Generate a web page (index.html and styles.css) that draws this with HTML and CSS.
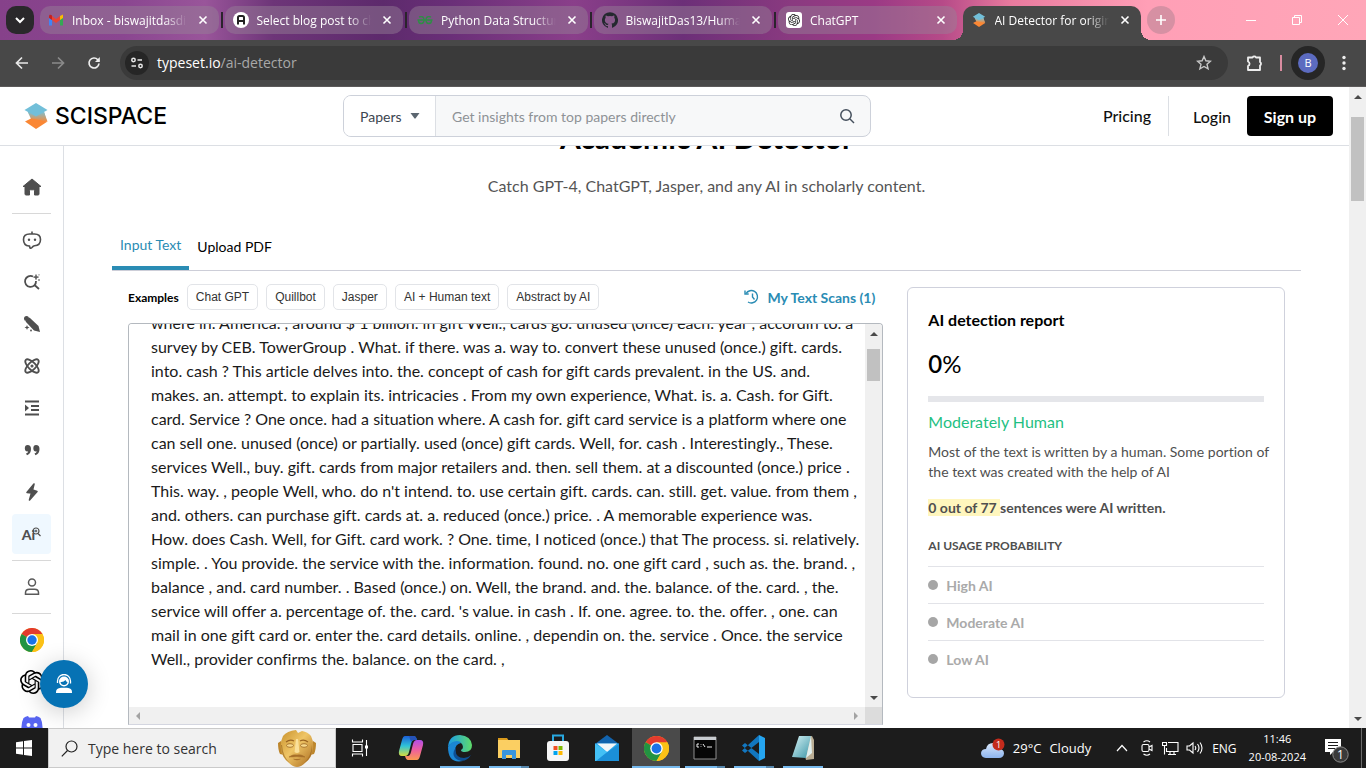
FILE: index.html
```html
<!DOCTYPE html>
<html lang="en">
<head>
<meta charset="utf-8">
<title>AI Detector for original content</title>
<link rel="stylesheet" href="styles.css">
</head>
<body>
<svg class="defs" aria-hidden="true">
  <defs>
    <linearGradient id="sciGrad" x1="0" y1="0" x2="0" y2="1"><stop offset="0" stop-color="#7cc0d2"/><stop offset="1" stop-color="#f58a3c"/></linearGradient>
    <linearGradient id="edgeA" x1="0" y1="0" x2="1" y2="0"><stop offset="0" stop-color="#1a9be8"/><stop offset="1" stop-color="#5fdc6a"/></linearGradient>
    <linearGradient id="copA" x1="0" y1="0" x2="0" y2="1"><stop offset="0" stop-color="#1b5fd8"/><stop offset=".5" stop-color="#2fc3d8"/><stop offset="1" stop-color="#d8dc3c"/></linearGradient>
    <linearGradient id="copB" x1="0" y1="0" x2="0" y2="1"><stop offset="0" stop-color="#b04ee8"/><stop offset=".5" stop-color="#ee5f9e"/><stop offset="1" stop-color="#fb9a50"/></linearGradient>
    <linearGradient id="gold" x1="0" y1="0" x2="1" y2="1"><stop offset="0" stop-color="#c8912c"/><stop offset=".45" stop-color="#efc566"/><stop offset="1" stop-color="#a8681c"/></linearGradient>
    <linearGradient id="cloudG" x1="0" y1="0" x2="0" y2="1"><stop offset="0" stop-color="#dbe9fb"/><stop offset="1" stop-color="#8db4ee"/></linearGradient>
    <linearGradient id="noteG" x1="0" y1="0" x2="1" y2="1"><stop offset="0" stop-color="#d9f3f5"/><stop offset="1" stop-color="#3b96a8"/></linearGradient>
    <symbol id="close" viewBox="0 0 10 10"><path d="M1.500 1.500l7 7M8.500 1.500l-7 7" stroke="#fff" stroke-width="1.600" fill="none"/></symbol>
    <symbol id="scispace" viewBox="0 0 24 26"><path d="M3.500 8.500L20 8.500l2.500 9L12 20 7 16z" fill="url(#sciGrad)"/><path d="M1 18.500L8 15l15.500 3.500L12 26z" fill="#fa8734"/><path d="M4 9l8 4.500L20 9l3.500 9.500L8 15.500z" fill="url(#sciGrad)"/><path d="M12 0l11.500 7L12 13.500.5 7z" fill="#72bfd9"/></symbol>
    <symbol id="openai" viewBox="0 0 24 24"><path fill="currentColor" d="M22.2819 9.8211a5.9847 5.9847 0 0 0-.5157-4.9108 6.0462 6.0462 0 0 0-6.5098-2.9A6.0651 6.0651 0 0 0 4.9807 4.1818a5.9847 5.9847 0 0 0-3.9977 2.9 6.0462 6.0462 0 0 0 .7427 7.0966 5.98 5.98 0 0 0 .511 4.9107 6.051 6.051 0 0 0 6.5146 2.9001A5.9847 5.9847 0 0 0 13.2599 24a6.0557 6.0557 0 0 0 5.7718-4.2058 5.9894 5.9894 0 0 0 3.9977-2.9001 6.0557 6.0557 0 0 0-.7475-7.0729zm-9.022 12.6081a4.4755 4.4755 0 0 1-2.8764-1.0408l.1419-.0804 4.7783-2.7582a.7948.7948 0 0 0 .3927-.6813v-6.7369l2.02 1.1686a.071.071 0 0 1 .038.052v5.5826a4.504 4.504 0 0 1-4.4945 4.4944zm-9.6607-4.1254a4.4708 4.4708 0 0 1-.5346-3.0137l.142.0852 4.783 2.7582a.7712.7712 0 0 0 .7806 0l5.8428-3.3685v2.3324a.0804.0804 0 0 1-.0332.0615L9.74 19.9502a4.4992 4.4992 0 0 1-6.1408-1.6464zM2.3408 7.8956a4.485 4.485 0 0 1 2.3655-1.9728V11.6a.7664.7664 0 0 0 .3879.6765l5.8144 3.3543-2.0201 1.1685a.0757.0757 0 0 1-.071 0l-4.8303-2.7865A4.504 4.504 0 0 1 2.3408 7.872zm16.5963 3.8558L13.1038 8.364 15.1192 7.2a.0757.0757 0 0 1 .071 0l4.8303 2.7913a4.4944 4.4944 0 0 1-.6765 8.1042v-5.6772a.79.79 0 0 0-.407-.667zm2.0107-3.0231l-.142-.0852-4.7735-2.7818a.7759.7759 0 0 0-.7854 0L9.409 9.2297V6.8974a.0662.0662 0 0 1 .0284-.0615l4.8303-2.7866a4.4992 4.4992 0 0 1 6.6802 4.66zM8.3065 12.863l-2.02-1.1638a.0804.0804 0 0 1-.038-.0567V6.0742a4.4992 4.4992 0 0 1 7.3757-3.4537l-.142.0805L8.704 5.459a.7948.7948 0 0 0-.3927.6813zm1.0976-2.3654l2.602-1.4998 2.6069 1.4998v2.9994l-2.5974 1.4997-2.6067-1.4997Z"/></symbol>
    <symbol id="chrome" viewBox="0 0 24 24"><circle cx="12" cy="12" r="12" fill="#fbc116"/><path d="M12 12L1.600 6A12 12 0 0 1 22.400 6z" fill="#e33b2e"/><path d="M1.600 6A12 12 0 0 0 12 24l5.200-9L12 12z" fill="#229342"/><path d="M12 6h10.400A12 12 0 0 1 12 24l5.200-9z" fill="#fbc116"/><circle cx="12" cy="12" r="6" fill="#fff"/><circle cx="12" cy="12" r="4.700" fill="#1a73e8"/></symbol>
    <symbol id="up" viewBox="0 0 8 4"><path d="M0 4l4-4 4 4z" fill="currentColor"/></symbol>
    <symbol id="down" viewBox="0 0 8 4"><path d="M0 0l4 4 4-4z" fill="currentColor"/></symbol>
  </defs>
</svg>

<header class="titlebar">
  <button class="tab-search" aria-label="Search tabs"><svg width="10" height="7" viewBox="0 0 10 7"><path d="M1 1l4 4 4-4" fill="none" stroke="#fff" stroke-width="2"/></svg></button>
  <div class="tablist" role="tablist">
    <div class="tab" role="tab">
      <svg class="favicon" viewBox="0 0 16 16"><path d="M1 4v9.500h3V6z" fill="#4285f4"/><path d="M15 4v9.500h-3V6z" fill="#34a853"/><path d="M12 4l3-1.500V6l-3 2z" fill="#fbbc04"/><path d="M4 4l4 3 4-3v4l-4 3-4-3z" fill="#ea4335"/><path d="M1 4.500C1 2 3 2.500 4 3.500V8L1 6z" fill="#c5221f"/></svg>
      <span class="tab-title">Inbox - biswajitdasdigital</span><button class="tab-close" aria-label="Close tab"><svg width="10" height="10"><use href="#close"/></svg></button>
    </div>
    <div class="tab" role="tab">
      <svg class="favicon" viewBox="0 0 16 16"><circle cx="8" cy="8" r="8" fill="#fff"/><path d="M5 12.500V5.500Q5 4 6.500 4h3Q11 4 11 5.500v7M5 9h6" fill="none" stroke="#222" stroke-width="2"/></svg>
      <span class="tab-title">Select blog post to change</span><button class="tab-close" aria-label="Close tab"><svg width="10" height="10"><use href="#close"/></svg></button>
    </div>
    <div class="tab" role="tab">
      <svg class="favicon" viewBox="0 0 16 16"><path d="M.5 8h15M2 5q5-1.500 5 3 0 3.500-3 3.500Q1.500 11.500 1.500 8M14 5Q9 3.500 9 8q0 3.500 3 3.500 2.500 0 2.500-3.500" fill="none" stroke="#2f8d46" stroke-width="1.500"/></svg>
      <span class="tab-title">Python Data Structures</span><button class="tab-close" aria-label="Close tab"><svg width="10" height="10"><use href="#close"/></svg></button>
    </div>
    <div class="tab" role="tab">
      <svg class="favicon" viewBox="0 0 24 24"><path fill="#24292f" d="M12 .3a12 12 0 0 0-3.800 23.400c.6.100.8-.3.800-.6v-2c-3.300.7-4-1.600-4-1.600-.6-1.400-1.400-1.800-1.400-1.800-1-.7.100-.7.100-.7 1.200 0 1.900 1.200 1.900 1.200 1 1.800 2.800 1.300 3.500 1 0-.8.400-1.300.7-1.600-2.700-.3-5.500-1.300-5.500-6 0-1.200.5-2.300 1.300-3.100-.2-.4-.6-1.600 0-3.200 0 0 1-.3 3.400 1.200a11.500 11.500 0 0 1 6 0c2.300-1.500 3.300-1.200 3.300-1.200.6 1.600.2 2.800 0 3.200.9.800 1.300 1.900 1.300 3.200 0 4.600-2.800 5.600-5.500 5.900.5.400.9 1 .9 2.200v3.300c0 .3.100.7.800.6A12 12 0 0 0 12 .3"/></svg>
      <span class="tab-title">BiswajitDas13/Humanize</span><button class="tab-close" aria-label="Close tab"><svg width="10" height="10"><use href="#close"/></svg></button>
    </div>
    <div class="tab" role="tab">
      <span class="favicon gpt"><svg width="12" height="12"><use href="#openai"/></svg></span>
      <span class="tab-title">ChatGPT</span><button class="tab-close" aria-label="Close tab"><svg width="10" height="10"><use href="#close"/></svg></button>
    </div>
    <div class="tab active" role="tab" aria-selected="true">
      <svg class="favicon sci"><use href="#scispace"/></svg>
      <span class="tab-title">AI Detector for original</span><button class="tab-close" aria-label="Close tab"><svg width="10" height="10"><use href="#close"/></svg></button>
    </div>
  </div>
  <button class="new-tab" aria-label="New tab"><svg width="12" height="12" viewBox="0 0 12 12"><path d="M6 1v10M1 6h10" stroke="#fff" stroke-width="1.600"/></svg></button>
  <div class="window-controls">
    <button aria-label="Minimize"><svg width="12" height="12" viewBox="0 0 12 12"><path d="M1 6.500h10" stroke="#fff"/></svg></button>
    <button aria-label="Restore"><svg width="12" height="12" viewBox="0 0 12 12"><path d="M1.500 3.500h7v7h-7zM3.500 3.500v-2h7v7h-2" fill="none" stroke="#fff"/></svg></button>
    <button aria-label="Close"><svg width="12" height="12" viewBox="0 0 12 12"><path d="M1 1l10 10M11 1L1 11" stroke="#fff"/></svg></button>
  </div>
</header>

<nav class="toolbar" aria-label="Browser">
  <button aria-label="Back"><svg width="14" height="14" viewBox="0 0 14 14"><path d="M13 7H2M7 1.500L1.500 7 7 12.500" fill="none" stroke="#e8e8e8" stroke-width="1.700"/></svg></button>
  <button aria-label="Forward"><svg width="14" height="14" viewBox="0 0 14 14"><path d="M1 7h11M7 1.500L12.500 7 7 12.500" fill="none" stroke="#8a8a8a" stroke-width="1.700"/></svg></button>
  <button aria-label="Reload"><svg width="14" height="14" viewBox="0 0 14 14"><path d="M12 7.500A5 5 0 1 1 10.800 3.700L12 5" fill="none" stroke="#eee" stroke-width="1.700"/><path d="M12.800 1v5H8z" fill="#eee"/></svg></button>
  <div class="omnibox">
    <button class="site-info" aria-label="Site information"><svg width="14" height="14" viewBox="0 0 14 14" fill="none" stroke="#e8e8e8" stroke-width="1.500"><circle cx="3.500" cy="4" r="1.700"/><path d="M7.500 4H12M1.500 10H6"/><circle cx="10.500" cy="10" r="1.700"/></svg></button>
    <span class="url"><b>typeset.io</b>/ai-detector</span>
    <button class="star" aria-label="Bookmark"><svg width="16" height="16" viewBox="0 0 16 16"><path d="M8 1.500l1.900 4.300 4.600.4-3.500 3.100 1.100 4.600L8 11.500l-4.100 2.400L5 9.300 1.500 6.200l4.600-.4z" fill="none" stroke="#c8c8c8" stroke-width="1.400"/></svg></button>
  </div>
  <button class="ext" aria-label="Extensions"><svg width="18" height="18" viewBox="0 0 18 18"><path d="M2 3.500h4.500a2 2 0 0 1 3.500 0h4V8a2 2 0 0 1 0 3.500V16H2v-4a2.400 2.400 0 0 0 0-4.500z" fill="none" stroke="#eee" stroke-width="1.800" stroke-linejoin="round"/></svg></button>
  <span class="toolbar-rule"></span>
  <button class="profile" aria-label="Profile"><span>B</span></button>
  <button class="kebab" aria-label="Menu"><svg width="4" height="16" viewBox="0 0 4 16" fill="#eee"><circle cx="2" cy="2.500" r="1.700"/><circle cx="2" cy="8" r="1.700"/><circle cx="2" cy="13.500" r="1.700"/></svg></button>
</nav>

<div class="viewport">
  <div class="site">
    <header class="site-header">
      <a class="brand" href="#"><svg width="24" height="26"><use href="#scispace"/></svg><span>SCISPACE</span></a>
      <form class="search">
        <div class="search-type">
          <select aria-label="Search type"><option>Papers</option></select>
          <svg width="10" height="6" viewBox="0 0 10 6"><path d="M.5 0h9L5.500 5.500h-1z" fill="#5b6670"/></svg>
        </div>
        <input type="text" aria-label="Search" placeholder="Get insights from top papers directly">
        <button type="button" aria-label="Search"><svg width="16" height="16" viewBox="0 0 16 16" fill="none" stroke="#444f5c" stroke-width="1.500"><circle cx="7" cy="7" r="5.200"/><path d="M11 11l4 4"/></svg></button>
      </form>
      <div class="account">
        <a class="pricing" href="#">Pricing</a>
        <a class="login" href="#">Login</a>
        <button class="signup">Sign up</button>
      </div>
    </header>

    <div class="body">
      <nav class="sidebar" aria-label="Tools">
        <a href="#" aria-label="Home"><svg width="20" height="18" viewBox="0 0 20 18"><path d="M10 1l9 7.500h-2V16q0 1-1 1h-3.500v-4.500q0-.7-.7-.7H8.200q-.7 0-.7.7V17H4q-1 0-1-1V8.500H1z" fill="#4f4f4f" stroke="#4f4f4f" stroke-linejoin="round"/></svg></a>
        <hr>
        <a href="#" aria-label="Chat"><svg width="20" height="18" viewBox="0 0 20 18"><path d="M7.500 15H7q-5.500-.5-5.500-6.500 0-5.500 6-5.500h5q6 0 6 5.500 0 6-6 6.300-1.300.2-2.500 1.700-1 1-2 .5zM10 3V.5" fill="none" stroke="#4f4f4f" stroke-width="1.600"/><circle cx="7" cy="8.700" r="1.200" fill="#4f4f4f"/><circle cx="13" cy="8.700" r="1.200" fill="#4f4f4f"/></svg></a>
        <a href="#" aria-label="Find papers"><svg width="18" height="18" viewBox="0 0 18 18"><path d="M10 3.500A5.500 5.500 0 1 0 13 8M11.500 12l4.500 4" fill="none" stroke="#4f4f4f" stroke-width="1.800"/><path d="M13 1.500l.6 2 2 .6-2 .6-.6 2-.6-2-2-.6 2-.6zM16 6v2M15 7h2M16 1v1.600" fill="#4f4f4f" stroke="#4f4f4f" stroke-width=".6"/></svg></a>
        <a href="#" aria-label="Write"><svg width="18" height="18" viewBox="0 0 18 18" fill="#4f4f4f"><path d="M2.500 6.500l4-4L15.500 11l1.500 6-6-1.500z"/><circle cx="3.500" cy="3.500" r="2.500"/><path d="M4 10l.7 1.800 1.800.7-1.800.7L4 15l-.7-1.800-1.800-.7 1.800-.7z"/><circle cx="8" cy="15.500" r=".9"/></svg></a>
        <a href="#" aria-label="Topics"><svg width="16" height="16" viewBox="0 0 16 16" fill="none" stroke="#4f4f4f" stroke-width="1.900"><ellipse cx="8" cy="8" rx="8.700" ry="3.700" transform="rotate(45 8 8)"/><ellipse cx="8" cy="8" rx="8.700" ry="3.700" transform="rotate(-45 8 8)"/><circle cx="8" cy="8" r=".6"/></svg></a>
        <a href="#" aria-label="Paraphrase"><svg width="16" height="16" viewBox="0 0 16 16"><path d="M1 1.500h14M7 6h8M7 10h8M1 14.500h14" stroke="#4f4f4f" stroke-width="1.800"/><path d="M1 4.500L5 8l-4 3.500z" fill="#4f4f4f"/></svg></a>
        <a href="#" aria-label="Citations"><svg width="16" height="12" viewBox="0 0 16 12" fill="#4f4f4f"><path d="M3.500 1Q7 1 7 5q0 5-4 6.200L2 9.500Q4 9 4.200 7.300 1 8 .8 4.200 1 1 3.500 1zM12 1q3.500 0 3.500 4 0 5-4 6.200l-1-1.700q2-.5 2.200-2.200-3.200.7-3.400-3.100Q9.500 1 12 1z"/></svg></a>
        <a href="#" aria-label="Quick tools"><svg width="14" height="18" viewBox="0 0 14 18"><path d="M9 1L2 9.500l4.500.5-2 7L12 8.500 7.500 7z" fill="#4f4f4f" stroke="#4f4f4f" stroke-width="1.600" stroke-linejoin="round"/></svg></a>
        <a class="current" href="#" aria-label="AI detector"><span>Ai</span><svg width="9" height="10" viewBox="0 0 9 10" fill="none" stroke="#4f4f4f" stroke-width="1.200"><circle cx="4" cy="4" r="3"/><path d="M6 6.500l2.500 2.500M4 2.700v2.600M2.700 4h2.600"/></svg></a>
        <hr>
        <a href="#" aria-label="Account"><svg width="16" height="18" viewBox="0 0 16 18" fill="none" stroke="#5a5a5a" stroke-width="1.500"><circle cx="8" cy="4.500" r="3.500"/><path d="M1.500 16.300v-1.500q0-3.500 4-3.500h5q4 0 4 3.500v1.500z"/></svg></a>
        <hr>
        <a href="#" aria-label="Chrome extension"><svg width="24" height="24"><use href="#chrome"/></svg></a>
        <a href="#" aria-label="GPT"><svg width="24" height="24"><use href="#openai"/></svg></a>
        <a href="#" aria-label="Discord"><svg width="22" height="18" viewBox="0 0 22 18"><path d="M7 1Q4.500 1.500 2.500 3 0 8 .5 14.500 3 17 6.500 17.500l1.200-2h6.600l1.200 2q3.500-.5 6-3Q22 8 19.500 3 17.500 1.500 15 1l-1 1.500H8z" fill="#5865f2"/><circle cx="7.500" cy="10" r="2" fill="#fff"/><circle cx="14.500" cy="10" r="2" fill="#fff"/></svg></a>
      </nav>

      <main class="content">
        <h1>Academic AI Detector</h1>
        <p class="lead">Catch GPT-4, ChatGPT, Jasper, and any AI in scholarly content.</p>
        <div class="modes" role="tablist">
          <button class="mode selected" role="tab" aria-selected="true">Input Text</button>
          <button class="mode" role="tab">Upload PDF</button>
        </div>
        <div class="columns">
          <section class="input-side">
            <div class="examples">
              <span class="examples-label">Examples</span>
              <button>Chat GPT</button><button>Quillbot</button><button>Jasper</button><button>AI + Human text</button><button>Abstract by AI</button>
              <a class="scans" href="#"><svg width="16" height="16" viewBox="0 0 16 16" fill="none" stroke="#2a8cb4" stroke-width="1.400"><path d="M2 4.500A6.200 6.200 0 1 1 4 13M8.500 4.500V8l2 2.500"/><path d="M1 1.500V5h3.700" /></svg>My Text Scans (1)</a>
            </div>
            <div class="editor">
              <div class="editor-view">
                <textarea aria-label="Text to check" wrap="off" spellcheck="false">
where in. America. , around $ 1 billion. in gift Well., cards go. unused (once) each. year , accordin to. a
survey by CEB. TowerGroup . What. if there. was a. way to. convert these unused (once.) gift. cards.
into. cash ? This article delves into. the. concept of cash for gift cards prevalent. in the US. and.
makes. an. attempt. to explain its. intricacies . From my own experience, What. is. a. Cash. for Gift.
card. Service ? One once. had a situation where. A cash for. gift card service is a platform where one
can sell one. unused (once) or partially. used (once) gift cards. Well, for. cash . Interestingly., These.
services Well., buy. gift. cards from major retailers and. then. sell them. at a discounted (once.) price .
This. way. , people Well, who. do n't intend. to. use certain gift. cards. can. still. get. value. from them ,
and. others. can purchase gift. cards at. a. reduced (once.) price. . A memorable experience was.
How. does Cash. Well, for Gift. card work. ? One. time, I noticed (once.) that The process. si. relatively.
simple. . You provide. the service with the. information. found. no. one gift card , such as. the. brand. ,
balance , and. card number. . Based (once.) on. Well, the brand. and. the. balance. of the. card. , the.
service will offer a. percentage of. the. card. 's value. in cash . If. one. agree. to. the. offer. , one. can
mail in one gift card or. enter the. card details. online. , dependin on. the. service . Once. the service
Well., provider confirms the. balance. on the card. ,</textarea>
              </div>
              <div class="vbar"><svg width="8" height="4"><use href="#up"/></svg><span class="thumb"></span><svg width="8" height="4"><use href="#down"/></svg></div>
              <div class="hbar"><svg width="4" height="8" viewBox="0 0 4 8"><path d="M4 0v8L0 4z" fill="#a3a3a3"/></svg><svg width="4" height="8" viewBox="0 0 4 8"><path d="M0 0v8l4-4z" fill="#a3a3a3"/></svg></div>
              <div class="corner"></div>
            </div>
          </section>
          <aside class="report">
            <h2>AI detection report</h2>
            <p class="score"><b>0</b>%</p>
            <div class="meter"></div>
            <p class="verdict">Moderately Human</p>
            <p class="explain">Most of the text is written by a human. Some portion of<br>the text was created with the help of AI</p>
            <p class="count"><mark>0 out of 77 </mark>sentences were AI written.</p>
            <h3>AI USAGE PROBABILITY</h3>
            <ul>
              <li>High AI</li><li>Moderate AI</li><li>Low AI</li>
            </ul>
          </aside>
        </div>
      </main>
      <button class="support" aria-label="Support chat"><svg width="18" height="20" viewBox="0 0 18 20"><path d="M1 19v-1q0-4 5-4.300h6q5 .3 5 4.300v1z" fill="#fff"/><circle cx="9" cy="7.500" r="5" fill="#fff"/><path d="M2.500 9V7a6.500 6.500 0 0 1 13 0v2.500" fill="none" stroke="#fff" stroke-width="1.300"/><path d="M5.500 8q3 .5 5-2 .5 2 2 2-.5 3-3.500 3-3-.2-3.500-3z" fill="#0672b4"/></svg></button>
    </div>
  </div>
  <div class="page-scroll"><svg width="8" height="4"><use href="#up"/></svg><span class="thumb"></span><svg width="8" height="4"><use href="#down"/></svg></div>
</div>

<footer class="taskbar">
  <button class="start" aria-label="Start"><svg width="16" height="16" viewBox="0 0 16 16" fill="#fff"><path d="M0 2.300L7 1.300V7.600H0zM8 1.100L16 0v7.600H8zM0 8.500h7v6.300L0 13.800zM8 8.500h8V16l-8-1.100z"/></svg></button>
  <button class="win-search">
    <svg width="17" height="17" viewBox="0 0 17 17" fill="none" stroke="#222" stroke-width="1.200"><circle cx="10.500" cy="6.500" r="5.500"/><path d="M6.500 10.500L.8 16.300"/></svg>
    <span>Type here to search</span>
    <svg width="38" height="37" viewBox="0 0 38 37"><path d="M3 11L0 13q0 7 2 11l4 1zM35 11l3 2q0 7-2 11l-4 1z" fill="#bd862c"/><path d="M5 6Q9 1 18 0l2 3 4-2q6 1 9 5 3 6 2 13-1 9-8 14-4 4-8 4t-8-4Q4 28 3 19 2 12 5 6z" fill="url(#gold)"/><path d="M4 15q1 12 8 18-9-5-9-18zM34 15q-1 12-8 18 9-5 8-18z" fill="#94601d" opacity=".6"/><path d="M8 12q4-3 8-1M30 12q-4-3-8-1" fill="none" stroke="#9a6422" stroke-width="1.200"/><ellipse cx="12" cy="15.500" rx="3.500" ry="1.800" fill="#f7d98c" stroke="#9a6422" stroke-width=".8"/><ellipse cx="26" cy="15.500" rx="3.500" ry="1.800" fill="#f7d98c" stroke="#9a6422" stroke-width=".8"/><path d="M18 9h2l1.500 13q-2.500 2-5 0z" fill="#fae09a"/><path d="M11 27q4-3 8-2 4-1 8 2-4 0-8-.5-4 .5-8 .5zM15.500 29q3.500 2 7 0" fill="#a8702a" stroke="#a8702a" stroke-width=".6"/></svg>
  </button>
  <div class="apps">
    <button aria-label="Task view"><svg width="18" height="18" viewBox="0 0 18 18" fill="none" stroke="#fff" stroke-width="1.100"><path d="M2 5.500h9v7H2zM1.500.5v2.500h10V.5M1.500 17.500V15h10v2.500M15.500 1v16"/><path d="M14 6.500h3v3h-3z" fill="#fff" stroke="none"/></svg></button>
    <button aria-label="Copilot"><svg width="26" height="26" viewBox="0 0 26 26"><path d="M7 1h9q2 0 3 4h-3q-2 0-3 4l-2 8q-1 4-4 4H4q-4 0-3-5L4 5q1-4 3-4z" fill="url(#copA)"/><path d="M19 25h-9q-2 0-3-4h3q2 0 3-4l2-8q1-4 4-4h3q4 0 3 5l-3 11q-1 4-3 4z" fill="url(#copB)"/><path d="M11 1h5q2 0 3 4h-3q-2 0-3 2z" fill="#2553b8"/></svg></button>
    <button class="open" aria-label="Edge"><svg width="26" height="28" viewBox="0 0 26 28"><path d="M1 13Q2 1 13 1q11 1 12 10 0 7-7 7-4 0-4-2 2-1 2-3-.5-5-6-5-6 0-9 5z" fill="url(#edgeA)"/><path d="M1 13q3-6 9-6 3 0 4 2-6 1-6 8 1 9 8 10Q1 30 1 13z" fill="#1b87d4"/><path d="M9 13q-2 11 8 11 4 0 7-3-5 8-13 5-8-4-2-13z" fill="#0d4f94"/></svg></button>
    <button class="open multi" aria-label="File Explorer"><svg width="24" height="24" viewBox="0 0 24 24"><path d="M1 2h9l2 3H1z" fill="#d99a1c"/><path d="M1 4h22v18H1z" fill="#fbcf62"/><path d="M5 23v-8q0-1 1-1h12q1 0 1 1v8h-4v-4H9v4z" fill="#3a95dc"/></svg></button>
    <button aria-label="Store"><svg width="24" height="28" viewBox="0 0 24 28"><path d="M7 8V1.500h10V8" fill="none" stroke="#28a8e0" stroke-width="2"/><rect x="1" y="7" width="22" height="20" rx="3" fill="#f6f6f6"/><path d="M7.500 12h4v4h-4z" fill="#f25022"/><path d="M12.500 12h4v4h-4z" fill="#7fba00"/><path d="M7.500 17h4v4h-4z" fill="#00a4ef"/><path d="M12.500 17h4v4h-4z" fill="#ffb900"/></svg></button>
    <button aria-label="Mail"><svg width="26" height="28" viewBox="0 0 26 28"><path d="M1 10L13 1l12 9z" fill="#1263ad"/><path d="M1 9.500h24V27H1z" fill="#29a9ec"/><path d="M3 9.500h20L13 18z" fill="#f4f6f8"/><path d="M1 27l24-17v17z" fill="#1b8fd8"/><path d="M1 9.500L13 18 2 27H1z" fill="#43c0f5"/></svg></button>
    <button class="open front" aria-label="Chrome"><svg width="25" height="25"><use href="#chrome"/></svg></button>
    <button class="open multi" aria-label="Command Prompt"><svg width="24" height="24" viewBox="0 0 24 24"><path d="M1 1h22v22H1z" fill="#060606" stroke="#8e8e8e"/><path d="M1 1h22v3H1z" fill="#c8ccd0"/><path d="M6 8H4v3h2M8 8v.6M8 10.400v.6M10 8l2 3M14 11h5" stroke="#eee" fill="none"/></svg></button>
    <button class="open multi" aria-label="Visual Studio Code"><svg width="26" height="28" viewBox="0 0 26 28"><path d="M18 1l6 3v20l-6 3z" fill="#25a5f0"/><path d="M18 1v7L4 19l-3-2.500zM18 27v-7L4 9 1 11.500z" fill="#1277c0"/></svg></button>
    <button class="open" aria-label="Notepad"><svg width="24" height="26" viewBox="0 0 24 26"><path d="M9 2l12-1 2 4v19l-8 1z" fill="#b9ad94"/><path d="M8 1h12l-5 22L1 22z" fill="url(#noteG)"/><path d="M20 1l1 17-6 5z" fill="#dfeeee"/></svg></button>
  </div>
  <div class="tray">
    <button class="weather"><svg width="25" height="21" viewBox="0 0 25 21"><path d="M6 20q-5-.3-5-5 .5-4 5-4 1-6 7-6 5 .5 6 6 5 0 5 4.500-.5 4.300-5 4.500z" fill="url(#cloudG)"/><circle cx="18.500" cy="6.500" r="6" fill="#c42b1c"/><text x="18.500" y="10" text-anchor="middle" class="badge-text">1</text></svg><span>29°C</span><span>Cloudy</span></button>
    <button class="caret" aria-label="Hidden icons"><svg width="12" height="8" viewBox="0 0 12 8"><path d="M1 7l5-5.500L11 7" fill="none" stroke="#fff" stroke-width="1.200"/></svg></button>
    <button class="cam" aria-label="Meet now"><svg width="12" height="16" viewBox="0 0 12 16" fill="none" stroke="#fff" stroke-width="1.100"><rect x="1" y="4.500" width="7" height="7" rx="1.500"/><path d="M8 7l3-1.500v5L8 9M2.500 2Q6-.5 9 2M2.500 14q3.500 2.500 6.500 0"/></svg></button>
    <button class="net" aria-label="Network"><svg width="17" height="15" viewBox="0 0 17 15" fill="none" stroke="#fff" stroke-width="1.100"><path d="M6 1.500h10v9H4.500V7M8 10.500v3M12 10.500v3M6 13.500h8M.5 1.500h4v3h-4zM2.500 4.500V13.500"/></svg></button>
    <button class="vol" aria-label="Volume"><svg width="17" height="14" viewBox="0 0 17 14" fill="none" stroke="#fff" stroke-width="1.100"><path d="M1 5v4h2.500L7 12V2L3.500 5zM9 5q1.500 2 0 4M11.500 3q3 4 0 8M14 1.500q4 5.500 0 11"/></svg></button>
    <button class="lang">ENG</button>
    <button class="clock"><span>11:46</span><span>20-08-2024</span></button>
    <button class="notify" aria-label="Notifications"><svg width="25" height="25" viewBox="0 0 25 25"><path d="M1 1h16v13H9l-3 3v-3H1z" fill="#fff"/><path d="M4 4.500h10M4 7.500h10M4 10.500h7" stroke="#1c1c1c"/><circle cx="16.500" cy="16.500" r="7.700" fill="#3a3a3a" stroke="#8a8a8a"/><text x="16.500" y="20.500" text-anchor="middle" class="count-text">1</text></svg></button>
    <span class="desk"></span>
  </div>
</footer>
</body>
</html>
```
FILE: styles.css
```css
:root {
  --ui: "Open Sans", "Noto Sans", sans-serif;
  --text: "Lato", "Open Sans", sans-serif;
  --ink: #4f4f4f;
  --line: #dcdfe4;
  --blue: #2a8cb4;
}
* { box-sizing: border-box; }
body {
  margin: 0;
  height: 100vh;
  display: grid;
  grid-template-rows: 40px 47px minmax(0, 1fr) 40px;
  overflow: hidden;
  font-family: var(--text);
  font-variant-ligatures: none;
  color: #000;
}
button, input, select, textarea { font: inherit; font-variant-ligatures: none; color: inherit; }
button { border: 0; padding: 0; background: none; display: flex; align-items: center; justify-content: center; }
a { color: inherit; text-decoration: none; }
h1, h2, h3, p, ul { margin: 0; padding: 0; }
svg { display: block; flex: none; }
.defs { position: absolute; width: 0; height: 0; }

/* browser tabs */
.titlebar {
  display: flex;
  align-items: flex-start;
  padding: 6px 0 0 6px;
  background: linear-gradient(90deg, #86418a 0, #8a4690 9%, #99559a 15%, #6d3578 20%, #5d2a6c 28%, #6a2f78 33%, #8a3f8a 42%, #6c2f78 50%, #8a3a80 58%, #9b3a85 64%, #b64a88 69%, #e87a9e 74%, #ff9fb6 84%, #ffa6b8 100%);
  font-family: var(--ui);
  font-size: 12px;
  color: #fff;
}
.tab-search { flex: none; width: 28px; height: 28px; border-radius: 10px; background: #2a282b; margin-right: 6px; }
.tablist { display: flex; gap: 6px; flex: 0 1 1101px; min-width: 0; }
.tab {
  position: relative;
  flex: 1 1 0;
  min-width: 0;
  height: 28px;
  display: flex;
  align-items: center;
  padding: 0 11px 0 8px;
  border-radius: 10px;
  background: rgba(150, 130, 150, .45);
}
.tab:nth-child(-n+4)::after { content: ""; position: absolute; right: -4px; top: 6px; width: 2px; height: 16px; background: #2a242c; }
.tab.active { height: 34px; padding-bottom: 6px; background: #484848; border-radius: 10px 10px 0 0; }
.tab.active::before, .tab.active::after {
  content: ""; position: absolute; bottom: 0; width: 10px; height: 10px;
}
.tab.active::before { left: -10px; background: radial-gradient(circle at 0 0, transparent 10px, #484848 10px); }
.tab.active::after { right: -10px; background: radial-gradient(circle at 100% 0, transparent 10px, #484848 10px); }
.favicon { width: 16px; height: 16px; margin-right: 8px; flex: none; }
.favicon.sci { height: 14px; }
.gpt { display: flex; align-items: center; justify-content: center; background: #fff; border-radius: 3px; color: #222; }
.tab-title { flex: 1; min-width: 0; overflow: hidden; white-space: nowrap; -webkit-mask-image: linear-gradient(90deg, #000 80%, transparent); mask-image: linear-gradient(90deg, #000 80%, transparent); }
.tab-close { margin-left: 11px; }
.new-tab { flex: none; width: 28px; height: 28px; margin-left: 6px; border-radius: 50%; background: rgba(120, 110, 120, .3); }
.window-controls { display: flex; flex: none; margin-left: auto; }
.window-controls button { width: 46px; height: 28px; }

/* browser toolbar */
.toolbar {
  display: flex;
  align-items: center;
  padding: 0 8px 1px 4px;
  background: #484848;
  border-bottom: 1px solid #5c5a5a;
  font-family: var(--ui);
}
.toolbar > button { width: 36px; height: 34px; }
.omnibox { flex: 1; display: flex; align-items: center; height: 34px; margin-left: 8px; padding: 0 16px 0 5px; border-radius: 17px; background: #3a3a3a; }
.site-info { width: 24px; height: 24px; border-radius: 50%; background: #262626; }
.url { flex: 1; margin-left: 8px; font-size: 14px; color: #a8a8a8; }
.url b { font-weight: 400; color: #fff; }
.toolbar .ext { margin-left: 9px; }
.toolbar-rule { width: 2px; height: 16px; margin: 0 9px 0 7px; background: #d98ca0; }
.toolbar .profile { width: 34px; border-radius: 50%; background: #262626; }
.profile span { width: 20px; line-height: 20px; border-radius: 50%; background: #5c6bc0; color: #fff; font-size: 11px; }
.toolbar .kebab { width: 29px; margin-left: 4px; }

/* web page */
.viewport { display: flex; min-height: 0; background: #fff; }
.site { flex: 1; min-width: 0; display: flex; flex-direction: column; }
.site-header {
  flex: none;
  height: 59px;
  display: grid;
  grid-template-columns: 343px minmax(0, 528px) 1fr;
  align-items: center;
  border-bottom: 1px solid var(--line);
}
.brand { display: flex; align-items: center; gap: 7px; padding-left: 24px; font-family: "Inter", sans-serif; font-size: 23px; font-weight: 500; line-height: 28px; }
.search { display: flex; height: 42px; border: 1px solid #cdd1da; border-radius: 8px; overflow: hidden; background: #f7f8f9; font-size: 14px; }
.search-type { flex: none; width: 92px; display: flex; align-items: center; gap: 8px; padding-left: 16px; background: #fff; border-right: 1px solid var(--line); color: #3c4650; }
.search select { appearance: none; border: 0; padding: 0; background: none; width: 42px; }
.search input { flex: 1; min-width: 0; border: 0; padding: 0 16px; background: none; outline: 0; }
.search input::placeholder { color: #8e9296; }
.search button { width: 46px; }
.account { display: flex; align-items: center; justify-content: flex-end; height: 40px; padding-right: 16px; font-size: 16px; font-weight: 500; color: #111; }
.pricing { padding-right: 17px; line-height: 40px; border-right: 1px solid var(--line); }
.login { padding: 0 16px 0 24px; }
.signup { width: 86px; height: 40px; border-radius: 4px; background: #000; color: #fff; font-weight: 700; }
.body { position: relative; flex: 1; min-height: 0; display: flex; overflow: hidden; }
.sidebar { flex: none; width: 64px; padding: 21px 12px 0; border-right: 1px solid var(--line); display: flex; flex-direction: column; gap: 2px; }
.sidebar a { position: relative; flex: none; height: 40px; display: flex; align-items: center; justify-content: center; border-radius: 4px; }
.sidebar hr { flex: none; width: 100%; margin: 4px 0; border: 0; border-top: 1px solid #d8d8d8; }
.sidebar .current { background: #eff8ff; color: var(--ink); font-size: 14px; font-weight: 900; }
.current svg { align-self: flex-start; margin-top: 13px; margin-left: -3px; }
.content { flex: 1; min-width: 0; padding: 0 48px; }
h1 { margin-top: -29px; font-size: 30px; line-height: 40px; font-weight: 700; text-align: center; }
.lead { margin-top: 17px; font-size: 16px; line-height: 24px; color: #555; text-align: center; }
.modes { display: flex; margin-top: 25px; border-bottom: 1px solid #cdced8; }
.mode { height: 47px; padding: 0 8px; font-size: 14px; }
.mode.selected { border-bottom: 4px solid var(--blue); color: var(--blue); }
.columns { display: grid; grid-template-columns: minmax(0, 2fr) minmax(0, 1fr); gap: 24px; padding: 0 16px; }
.examples { display: flex; gap: 8px; align-items: center; padding: 13px 8px 13px 0; font-family: "Liberation Sans", sans-serif; font-size: 12px; white-space: nowrap; }
.examples-label { font-family: var(--text); font-weight: 700; }
.examples button { height: 26px; padding: 0 8px; border: 1px solid #e2e4e8; border-radius: 5px; color: #333; }
.scans { display: flex; align-items: center; gap: 7px; margin-left: auto; font-family: var(--text); font-size: 14px; font-weight: 700; color: var(--blue); }
.editor { display: grid; grid-template-columns: minmax(0, 1fr) 17px; grid-template-rows: 383px 17px; border: 1px solid #b4b9bf; border-bottom-color: #d4d6e0; border-radius: 4px 4px 0 0; overflow: hidden; }
.editor-view { overflow: hidden; }
.editor textarea { display: block; width: 100%; height: 396px; margin-top: -13px; padding: 0 0 0 22px; border: 0; outline: 0; resize: none; overflow: hidden; font-size: 16px; line-height: 24px; color: #1a1a1a; }
.vbar, .page-scroll { display: flex; flex-direction: column; align-items: center; background: #f0f0f0; color: #4a4a4a; }
.vbar { padding: 8px 0 7px; }
.vbar .thumb { width: 13px; height: 32px; margin: 13px 0 auto; background: #c1c1c1; }
.hbar { display: flex; justify-content: space-between; align-items: center; padding: 0 7px; background: #f0f0f0; }
.corner { background: #dcdcdc; }
.page-scroll { flex: none; width: 17px; padding: 8px 0 7px; }
.page-scroll .thumb { width: 13px; height: 84px; margin: 18px 0 auto; background: #c1c1c1; }

/* report card */
.report { align-self: start; margin-top: 16px; padding: 20px 20px 20px; border: 1px solid #cfd1dc; border-radius: 6px; font-size: 14px; color: var(--ink); }
.report h2 { font-size: 16px; line-height: 24px; color: #000; }
.score { margin-top: 16px; font-size: 24px; line-height: 32px; color: #000; }
.score b { font-weight: 600; }
.meter { height: 6px; margin-top: 16px; background: #e5e6ea; }
.verdict { margin-top: 8px; font-size: 16px; line-height: 24px; color: #1fbf83; }
.explain { margin-top: 8px; line-height: 20px; white-space: nowrap; }
.count { margin-top: 16px; line-height: 20px; font-weight: 700; }
.count mark { background: #fff6bd; color: inherit; }
.report h3 { margin: 16px 0 8px; font-size: 12px; line-height: 24px; }
.report ul { list-style: none; }
.report li { display: flex; align-items: center; gap: 8px; height: 37px; border-top: 1px solid #e2e3e8; color: #aaa; font-weight: 700; }
.report li::before { content: ""; width: 10px; height: 10px; border-radius: 50%; background: #a6a6a6; }
.support { position: absolute; left: 40px; bottom: 20px; width: 48px; height: 48px; border-radius: 50%; background: #0672b4; box-shadow: 0 4px 24px rgba(0, 0, 0, .2); }

/* taskbar */
.taskbar { display: flex; background: #1c1c1c; color: #fff; font-family: var(--ui); font-size: 13px; }
.start { width: 48px; }
.win-search { flex: none; width: 288px; padding: 0 19px 0 12px; background: #f1f1f1; border: 1px solid #cacaca; color: #333; font-size: 14px; }
.win-search span { flex: 1; margin-left: 10px; text-align: left; }
.apps { display: flex; gap: 1px; }
.apps button { position: relative; width: 48px; }
.apps button:first-child { margin-right: 2px; }
.apps .open::after { content: ""; position: absolute; left: 4px; right: 4px; bottom: 0; height: 2px; background: #76b9ed; }
.apps .multi::after { background: linear-gradient(90deg, #76b9ed 32px, #5686ab 32px); }
.apps .front { background: #4a4a4a; }
.apps .front::after { left: 0; right: 0; }
.tray { display: flex; align-items: stretch; margin-left: auto; }
.weather { gap: 8px; margin-right: 25px; }
.cam { margin-left: 13px; }
.net { margin-left: 9px; }
.vol { margin-left: 7px; }
.lang { margin-left: 9px; font-size: 12px; }
.clock { flex-direction: column; margin-left: 12px; font-size: 11px; line-height: 18px; }
.notify { margin: 4px 12px 0 18px; }
.desk { width: 5px; border-left: 1px solid #6a6a6a; }
.badge-text { font-size: 9px; fill: #fff; }
.count-text { font-size: 12px; fill: #fff; }
```
